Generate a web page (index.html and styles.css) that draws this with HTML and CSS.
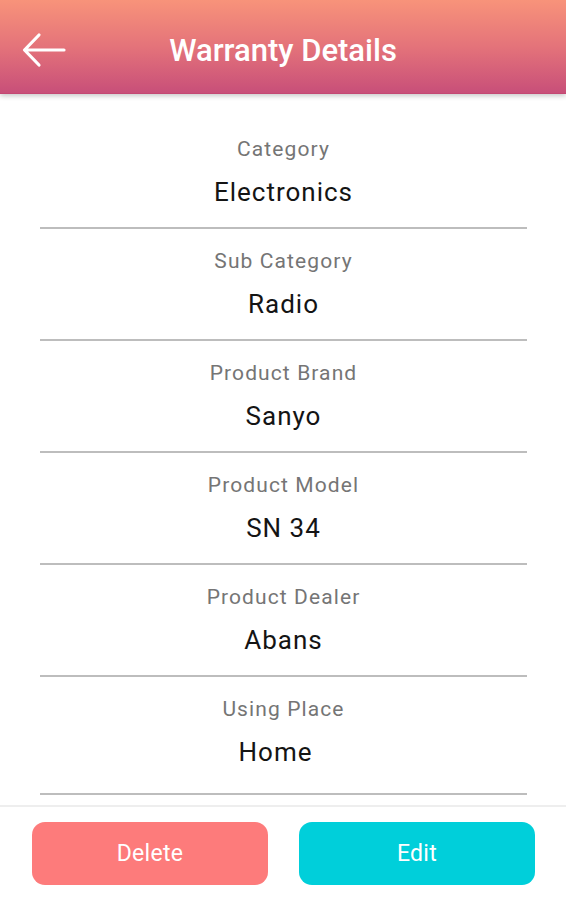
FILE: index.html
```html
<html>
<head>
<title>Warranty Details</title>
<link rel="stylesheet" href="styles.css">
</head>
<body>
<header class="topbar">
  <a class="back" href="#" title="Back">
    <svg width="46" height="38" viewBox="0 0 46 38"><path d="M43 18H4 M18 3 L3.5 18 L18 33" fill="none" stroke="#fff" stroke-width="3.2" stroke-linecap="round" stroke-linejoin="round"/></svg>
  </a>
  <h1>Warranty Details</h1>
</header>

<div class="details">
  <div class="row">
    <div class="label">Category</div>
    <div class="value">Electronics</div>
  </div>
  <div class="row">
    <div class="label">Sub Category</div>
    <div class="value">Radio</div>
  </div>
  <div class="row">
    <div class="label">Product Brand</div>
    <div class="value">Sanyo</div>
  </div>
  <div class="row">
    <div class="label">Product Model</div>
    <div class="value">SN 34</div>
  </div>
  <div class="row">
    <div class="label">Product Dealer</div>
    <div class="value">Abans</div>
  </div>
  <div class="row last">
    <div class="label">Using Place</div>
    <div class="value shifted">Home</div>
  </div>
</div>

<footer class="actions">
  <button class="btn delete" type="button">Delete</button>
  <button class="btn edit" type="button">Edit</button>
</footer>
</body>
</html>
```

FILE: styles.css
```css
html,body {margin:0; padding:0; font-family:Roboto, "Noto Sans", Arial, sans-serif; background:#fff;}

.topbar {position:relative; z-index:1; height:93px; display:flex; align-items:center; justify-content:center; background:linear-gradient(to bottom, #f8937a 0%, #e4737a 50%, #c84f79 100%); border-bottom:1px solid #c34873; box-shadow:0 2px 5px rgba(0,0,0,0.22);}
.topbar h1 {margin:0; padding-top:7px; font-size:31px; font-weight:500; color:#fff;}
.back {position:absolute; left:21px; top:32px; display:block; line-height:0;}

.details {padding:23px 39px 0 40px;}
.row {padding:20px 0; border-bottom:2px solid #bdbdbd; text-align:center;}
.row.last {padding-bottom:26px;}
.label {font-size:21px; line-height:24px; color:#757575; letter-spacing:1.1px;}
.value {margin-top:16px; font-size:26px; line-height:30px; color:#141414; letter-spacing:1px;}
.value.shifted {padding-right:16px;}

.actions {margin-top:10px; border-top:2px solid #eeeeee; padding:15px 31px 15px 32px; display:flex; gap:31px;}
.btn {flex:1; height:63px; border:none; border-radius:13px; font-family:Roboto, "Noto Sans", Arial, sans-serif; font-size:23px; letter-spacing:0.3px; color:#fff; cursor:pointer;}
.btn.delete {background:#fd7b7b;}
.btn.edit {background:#00cfda;}
```
